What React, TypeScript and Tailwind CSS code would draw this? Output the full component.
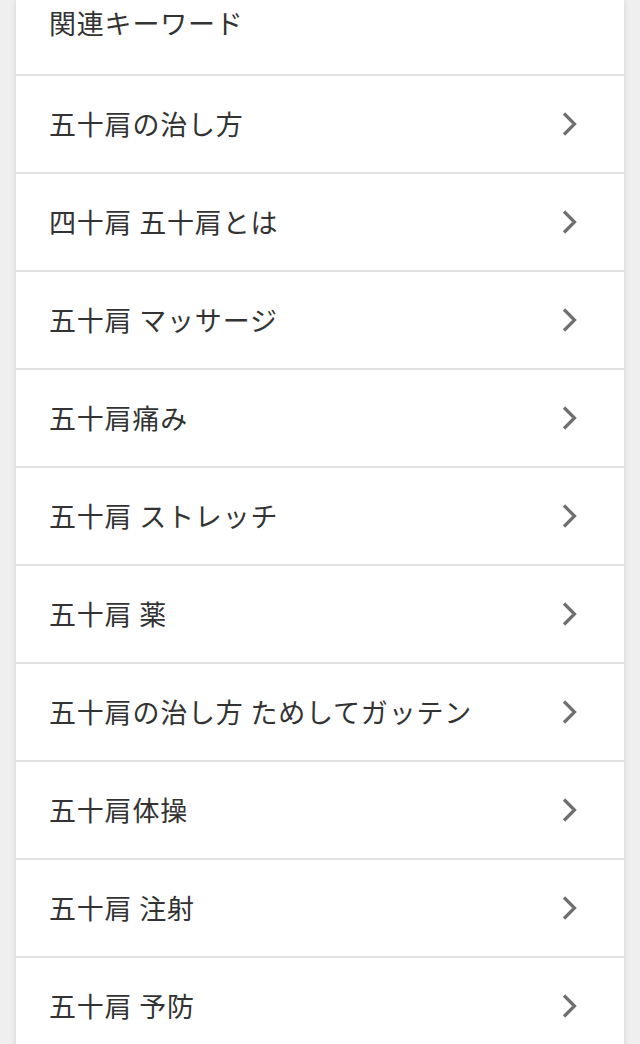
const keywords = [
  '五十肩の治し方',
  '四十肩 五十肩とは',
  '五十肩 マッサージ',
  '五十肩痛み',
  '五十肩 ストレッチ',
  '五十肩 薬',
  '五十肩の治し方 ためしてガッテン',
  '五十肩体操',
  '五十肩 注射',
  '五十肩 予防',
];

function Chevron() {
  return (
    <svg width="16" height="24" viewBox="0 0 16 24" className="shrink-0">
      <path d="M3 1.5 L13.5 12 L3 22.5" fill="none" stroke="#6f6f6f" strokeWidth="3.2" />
    </svg>
  );
}

export default function App() {
  return (
    <div
      className="min-h-screen h-[1044px] overflow-hidden bg-[#efefef] px-4"
      style={{ fontFamily: '"Noto Sans CJK JP", "Noto Sans", sans-serif' }}
    >
      <div className="bg-white shadow-[0_0_6px_rgba(0,0,0,0.12)]">
        {/* Header */}
        <div className="h-[74px] pl-[33px] pt-[4px] text-[27px] leading-[38px] tracking-[0.8px] text-[#333]">
          関連キーワード
        </div>

        {keywords.map((k) => (
          <div
            key={k}
            className="h-[98px] border-t-2 border-[#e2e2e2] flex items-center justify-between pl-[33px] pr-[47px]"
          >
            <span className="text-[27px] text-[#333] tracking-[0.8px]">{k}</span>
            <Chevron />
          </div>
        ))}
      </div>
    </div>
  );
}
